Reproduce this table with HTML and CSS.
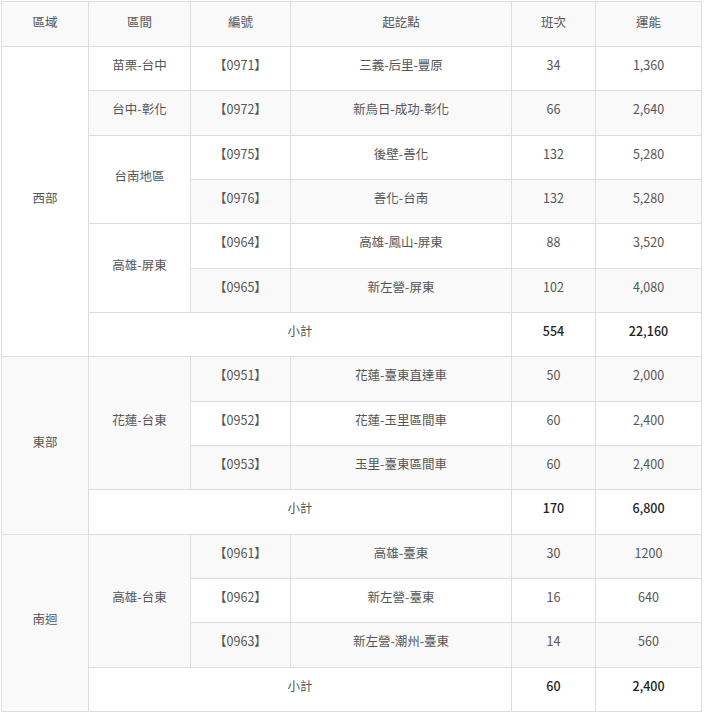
FILE: index.html
```html
<!DOCTYPE html>
<html lang="zh-Hant">
<head>
<meta charset="utf-8">
<link rel="stylesheet" href="styles.css">
</head>
<body>
<table class="grid">
  <colgroup>
    <col class="c1"><col class="c2"><col class="c3"><col class="c4"><col class="c5"><col class="c6">
  </colgroup>
  <thead>
    <tr><th>區域</th><th>區間</th><th>編號</th><th>起訖點</th><th>班次</th><th>運能</th></tr>
  </thead>
  <tbody>
    <tr><td rowspan="7">西部</td><td>苗栗-台中</td><td>【0971】</td><td>三義-后里-豐原</td><td>34</td><td>1,360</td></tr>
    <tr><td>台中-彰化</td><td>【0972】</td><td>新烏日-成功-彰化</td><td>66</td><td>2,640</td></tr>
    <tr><td rowspan="2">台南地區</td><td>【0975】</td><td>後壁-善化</td><td>132</td><td>5,280</td></tr>
    <tr><td>【0976】</td><td>善化-台南</td><td>132</td><td>5,280</td></tr>
    <tr><td rowspan="2">高雄-屏東</td><td>【0964】</td><td>高雄-鳳山-屏東</td><td>88</td><td>3,520</td></tr>
    <tr><td>【0965】</td><td>新左營-屏東</td><td>102</td><td>4,080</td></tr>
    <tr><td colspan="3">小計</td><td class="b">554</td><td class="b">22,160</td></tr>
    <tr><td rowspan="4">東部</td><td rowspan="3">花蓮-台東</td><td>【0951】</td><td>花蓮-臺東直達車</td><td>50</td><td>2,000</td></tr>
    <tr><td>【0952】</td><td>花蓮-玉里區間車</td><td>60</td><td>2,400</td></tr>
    <tr><td>【0953】</td><td>玉里-臺東區間車</td><td>60</td><td>2,400</td></tr>
    <tr><td colspan="3">小計</td><td class="b">170</td><td class="b">6,800</td></tr>
    <tr><td rowspan="4">南迴</td><td rowspan="3">高雄-台東</td><td>【0961】</td><td>高雄-臺東</td><td>30</td><td>1200</td></tr>
    <tr><td>【0962】</td><td>新左營-臺東</td><td>16</td><td>640</td></tr>
    <tr><td>【0963】</td><td>新左營-潮州-臺東</td><td>14</td><td>560</td></tr>
    <tr><td colspan="3">小計</td><td class="b">60</td><td class="b">2,400</td></tr>
  </tbody>
</table>
</body>
</html>
```
FILE: styles.css
```css
html, body {
  margin: 0;
  padding: 0;
  background: #ffffff;
}
body {
  padding: 1px 0 0 1px;
}
.grid {
  border-collapse: collapse;
  table-layout: fixed;
  width: 700px;
  font-family: "Noto Sans CJK TC", "Noto Sans", sans-serif;
  font-size: 12.5px;
  color: #555555;
  border: 1px solid #dddddd;
}
.c1 { width: 87px; }
.c2 { width: 102px; }
.c3 { width: 100px; }
.c4 { width: 221px; }
.c5 { width: 84px; }
.c6 { width: 106px; }
.grid th,
.grid td {
  border: 1px solid #dddddd;
  text-align: center;
  vertical-align: middle;
  padding: 0 4px 8px;
  font-weight: normal;
  box-sizing: border-box;
}
.grid thead th {
  height: 45px;
  padding-bottom: 6px;
  background: #f9f9f9;
  color: #555555;
}
.grid tbody td {
  height: 44.33px;
}
.grid tbody tr:nth-child(even) td {
  background: #f9f9f9;
}
.grid td.b {
  color: #222222;
  font-weight: 500;
}
```
